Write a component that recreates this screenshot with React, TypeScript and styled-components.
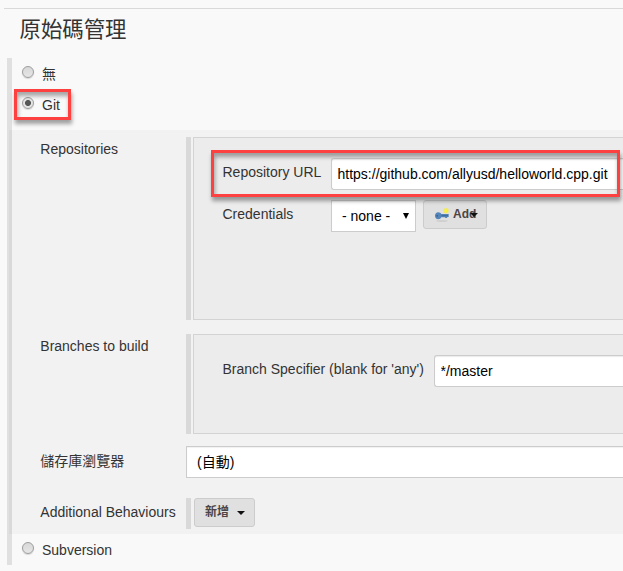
import React from "react";
import styled, { createGlobalStyle } from "styled-components";

const Global = createGlobalStyle`
  * { box-sizing: border-box; }
  body { margin: 0; background: #f9f9f9; color: #333; overflow: hidden;
    font: 14px/20px "Liberation Sans", "Noto Sans CJK TC", sans-serif; }
  button, input, select { font: inherit; }
`;

const Page = styled.main`
  position: relative;
  width: 623px;
  height: 571px;
  overflow: hidden;
  padding-top: 8px;
`;

const Divider = styled.div`
  height: 1px;
  margin-left: 4px;
  background: #d9d9d9;
`;

const Heading = styled.h1`
  margin: 0;
  padding-left: 19.5px;
  height: 49px;
  line-height: 43px;
  font-size: 21.4px;
  font-weight: 400;
`;

const Section = styled.section`
  margin-left: 7px;
  height: 507px;
  border-left: 5px solid #e0e0e0;
`;

const Option = styled.label<{ $height: number }>`
  display: flex;
  height: ${(p) => p.$height}px;
  padding: 8px 0 0 10px;
`;

const Radio = styled.span<{ $checked?: boolean }>`
  display: block;
  width: 12px;
  height: 12px;
  margin-right: 8px;
  border: 1px solid #9c9c9c;
  border-radius: 50%;
  background: ${(p) =>
    p.$checked
      ? "radial-gradient(circle, #565656 0 2.6px, #e4e4e4 3.4px)"
      : "linear-gradient(#d8d8d8, #e6e6e6)"};
  box-shadow: 0 1px 1px rgba(0, 0, 0, 0.14);
`;

const OptionText = styled.span`
  margin-top: -2px;
`;

const Panel = styled.div`
  height: 404px;
  margin-left: -3px;
  padding-top: 7px;
  border-left: 3px solid #d9d9d9;
  background: #f2f2f2;
`;

const Row = styled.div<{ $height: number; $gap: number }>`
  display: grid;
  grid-template-columns: 174px 1fr;
  height: ${(p) => p.$height}px;
  margin-bottom: ${(p) => p.$gap}px;
`;

const RowLabel = styled.div<{ $top: number }>`
  padding: ${(p) => p.$top}px 0 0 28.3px;
  white-space: nowrap;
`;

const Repeated = styled.div<{ $gap?: number }>`
  border-left: 5px solid #d9d9d9;
  padding-left: ${(p) => p.$gap ?? 2}px;
`;

const Box = styled.div`
  height: 100%;
  padding: 20px 0 0 28.5px;
  border: 1px solid #d3d3d3;
  border-right: 0;
  background: #ececec;
`;

const Field = styled.div<{ $label: number }>`
  display: grid;
  grid-template-columns: ${(p) => p.$label}px 1fr;
  height: 42px;
  white-space: nowrap;
`;

const FieldLabel = styled.span`
  padding-top: 4px;
`;

const Input = styled.input`
  width: 100%;
  height: 32px;
  padding: 0 0 0 5.5px;
  border: 1px solid #ccc;
  border-right: 0;
  border-radius: 3px 0 0 3px;
  background: #fff;
  color: #000;
  box-shadow: inset 0 1px 1px rgba(0, 0, 0, 0.08);
`;

const Controls = styled.div`
  display: flex;
  gap: 7px;
`;

const SelectBox = styled.div<{ $width: string }>`
  display: flex;
  align-items: center;
  justify-content: space-between;
  width: ${(p) => p.$width};
  height: 32px;
  padding: 0 6px 0 10px;
  border: 1px solid #ccc;
  background: #fff;
  color: #000;
  box-shadow: inset 0 1px 1px rgba(0, 0, 0, 0.06);
`;

const Button = styled.button<{ $width: number }>`
  display: flex;
  align-items: center;
  width: ${(p) => p.$width}px;
  height: 29px;
  padding: 0 0 1px 10px;
  border: 1px solid #ccc;
  border-radius: 3px;
  background: #e0e0e0;
  color: #4d4545;
  font-size: 12px;
  font-weight: 700;
`;

const Key = styled.svg`
  flex: none;
  margin: 2px 3px 0 0;
`;

const Caret = styled.svg<{ $offset: number }>`
  flex: none;
  margin: 1px 0 0 ${(p) => p.$offset}px;
`;

const Highlight = styled.div<{ $x: number; $y: number; $w: number; $h: number }>`
  position: absolute;
  left: ${(p) => p.$x}px;
  top: ${(p) => p.$y}px;
  width: ${(p) => p.$w}px;
  height: ${(p) => p.$h}px;
  border: 3px solid #fd4040;
  box-shadow: 1px 4px 4px rgba(0, 0, 0, 0.36), inset 1px 4px 4px rgba(0, 0, 0, 0.34);
  pointer-events: none;
`;

const KeyIcon = () => (
  <Key width="16" height="16" viewBox="0 0 16 16">
    <ellipse cx="8" cy="14" rx="6" ry="0.9" fill="#cfcfcf" />
    <circle cx="12" cy="3.8" r="2.7" fill="#f1e868" />
    <circle cx="12" cy="3.8" r="1.3" fill="#f7f23a" />
    <path d="M1 8.8C1 6.6 2.4 5.2 4.200 5.200c1.500 0 2.600.8 3.100 1.800h7.400v3h-1.500v1h-2v-.8H7.300c-.5 1.200-1.500 2-3.100 2C2.300 12.200 1 10.900 1 8.800Z" fill="#5584b9" />
    <path d="M7.500 8.700h6.500" stroke="#355f92" strokeWidth="0.8" />
    <circle cx="3.200" cy="8.800" r="0.9" fill="#355f92" />
  </Key>
);

const DownCaret = ({ offset }: { offset: number }) => (
  <Caret $offset={offset} width="8" height="4">
    <path d="M0 0h8L4 4Z" fill="#111" />
  </Caret>
);

export default function App() {
  return (
    <>
      <Global />
      <Page>
        <Divider />
        <Heading>原始碼管理</Heading>
        <Section>
          <Option $height={31}>
            <Radio />
            <OptionText>無</OptionText>
          </Option>
          <Option $height={41}>
            <Radio $checked />
            <OptionText>Git</OptionText>
          </Option>
          <Panel>
            <Row $height={183} $gap={14}>
              <RowLabel $top={2}>Repositories</RowLabel>
              <Repeated>
                <Box>
                  <Field $label={108.5}>
                    <FieldLabel>Repository URL</FieldLabel>
                    <Input readOnly value="https://github.com/allyusd/helloworld.cpp.git" />
                  </Field>
                  <Field $label={108.5}>
                    <FieldLabel>Credentials</FieldLabel>
                    <Controls>
                      <SelectBox $width="85px">
                        - none -
                        <svg width="6" height="6"><path d="M0 0h6L3 6Z" /></svg>
                      </SelectBox>
                      <Button $width={64}>
                        <KeyIcon />
                        <span>Add</span>
                        <DownCaret offset={-6} />
                      </Button>
                    </Controls>
                  </Field>
                </Box>
              </Repeated>
            </Row>
            <Row $height={100} $gap={12}>
              <RowLabel $top={2}>Branches to build</RowLabel>
              <Repeated>
                <Box>
                  <Field $label={211.5}>
                    <FieldLabel>Branch Specifier (blank for 'any')</FieldLabel>
                    <Input readOnly value="*/master" />
                  </Field>
                </Box>
              </Repeated>
            </Row>
            <Row $height={32} $gap={20}>
              <RowLabel $top={5}>儲存庫瀏覽器</RowLabel>
              <SelectBox $width="460px">(自動)</SelectBox>
            </Row>
            <Row $height={31} $gap={0}>
              <RowLabel $top={4}>Additional Behaviours</RowLabel>
              <Repeated $gap={3}>
                <Button $width={61}>
                  <span>新增</span>
                  <DownCaret offset={8} />
                </Button>
              </Repeated>
            </Row>
          </Panel>
          <Option $height={31}>
            <Radio />
            <OptionText>Subversion</OptionText>
          </Option>
        </Section>
        <Highlight $x={14} $y={89} $w={57} $h={31} />
        <Highlight $x={211} $y={150} $w={409} $h={47} />
      </Page>
    </>
  );
}
